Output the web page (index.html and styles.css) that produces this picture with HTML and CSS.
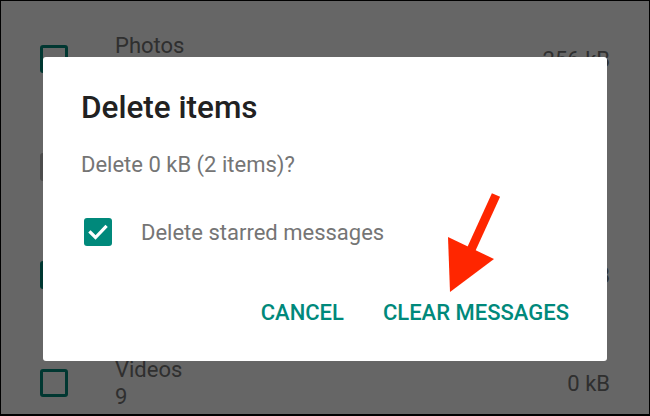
FILE: index.html
```html
<!DOCTYPE html>
<html>
<head>
<meta charset="utf-8">
<link rel="stylesheet" href="styles.css">
</head>
<body>
<div class="screen">
  <ul class="list">
    <li class="row">
      <span class="box"></span>
      <div class="info"><div class="name">Photos</div><div class="count">&nbsp;</div></div>
      <div class="size">256 kB</div>
    </li>
    <li class="row">
      <span class="box box-gray"></span>
      <div class="info"></div>
    </li>
    <li class="row">
      <span class="box box-on"></span>
      <div class="info"></div>
      <div class="size">0 kB</div>
    </li>
    <li class="row">
      <span class="box"></span>
      <div class="info"><div class="name">Videos</div><div class="count">9</div></div>
      <div class="size">0 kB</div>
    </li>
  </ul>
  <div class="scrim"></div>
  <div class="dialog">
    <h1 class="title">Delete items</h1>
    <p class="message">Delete 0 kB (2 items)?</p>
    <label class="option">
      <span class="check">
        <svg viewBox="0 0 28 28" width="28" height="28"><path d="M6.5 14.5 L11.5 19.5 L21.5 9" fill="none" stroke="#fff" stroke-width="3.2" stroke-linecap="square"/></svg>
      </span>
      <span class="option-text">Delete starred messages</span>
    </label>
    <div class="actions">
      <span class="btn">CANCEL</span>
      <span class="btn">CLEAR MESSAGES</span>
    </div>
  </div>
  <svg class="arrow" viewBox="0 0 650 416" width="650" height="416">
    <line x1="496" y1="195" x2="470" y2="252" stroke="#ff2600" stroke-width="9"/>
    <polygon points="448,237 494,259 450,292" fill="#ff2600"/>
  </svg>
</div>
</body>
</html>
```

FILE: styles.css
```css
html, body {
  margin: 0;
  padding: 0;
}
body {
  width: 650px;
  height: 416px;
  overflow: hidden;
  font-family: Roboto, "Noto Sans", sans-serif;
}
.screen {
  position: relative;
  box-sizing: border-box;
  width: 650px;
  height: 416px;
  background: #ffffff;
  border-top: 1px solid #000;
  border-left: 1px solid #000;
  border-right: 1px solid #000;
  border-bottom: 2px solid #000;
  overflow: hidden;
}
.list {
  list-style: none;
  margin: 0;
  padding: 4px 0 0 0;
}
.row {
  height: 108px;
  display: flex;
  align-items: center;
  padding: 0 39px 0 39px;
}
.box {
  box-sizing: border-box;
  width: 28px;
  height: 28px;
  border: 3px solid #00897b;
  border-radius: 3px;
  flex: none;
}
.box-gray {
  background: #bdbdbd;
  border-color: #bdbdbd;
}
.box-on {
  background: #00897b;
}
.info {
  flex: 1;
  margin-left: 47px;
  color: #757575;
  font-size: 22px;
  line-height: 27px;
}
.size {
  color: #757575;
  font-size: 22px;
}
.scrim {
  position: absolute;
  inset: 0;
  background: rgba(0, 0, 0, 0.6);
}
.dialog {
  position: absolute;
  left: 42px;
  top: 56px;
  width: 564px;
  height: 304px;
  box-sizing: border-box;
  background: #fff;
  border-radius: 3px;
  padding: 31px 38px 0 38px;
  display: flex;
  flex-direction: column;
}
.title {
  margin: 0;
  font-size: 31.5px;
  font-weight: 500;
  color: #212121;
  line-height: 40px;
}
.message {
  margin: 23px 0 0 0;
  font-size: 22px;
  line-height: 28px;
  color: #757575;
}
.option {
  display: flex;
  align-items: center;
  margin-top: 39px;
  margin-left: 3px;
}
.check {
  width: 28px;
  height: 28px;
  border-radius: 3px;
  background: #00897b;
  display: flex;
}
.option-text {
  margin-left: 29px;
  font-size: 22px;
  color: #757575;
}
.actions {
  display: flex;
  justify-content: flex-end;
  gap: 39px;
  margin-top: 54px;
  line-height: 26px;
}
.btn {
  font-size: 22px;
  font-weight: 500;
  color: #00897b;
}
.arrow {
  position: absolute;
  left: -1px;
  top: -1px;
  pointer-events: none;
}
```
